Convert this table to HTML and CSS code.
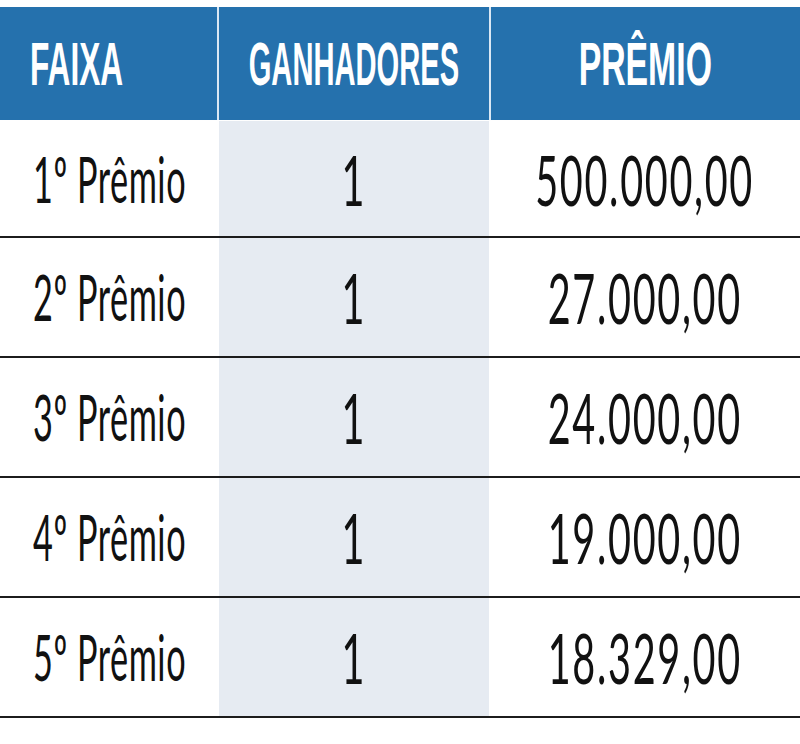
FILE: index.html
```html
<!DOCTYPE html>
<html lang="pt-BR">
<head>
<meta charset="utf-8">
<title>Resultado</title>
<link rel="stylesheet" href="styles.css">
</head>
<body>
<div class="table">
  <div class="row head">
    <div class="cell c1"><span class="t h-faixa">FAIXA</span></div>
    <div class="cell c2"><span class="t h-ganh">GANHADORES</span></div>
    <div class="cell c3"><span class="t h-premio">PRÊMIO</span></div>
  </div>
  <div class="row body first">
    <div class="cell c1"><span class="t lbl">1º Prêmio</span></div>
    <div class="cell c2"><span class="t num">1</span></div>
    <div class="cell c3"><span class="t num">500.000,00</span></div>
  </div>
  <div class="row body">
    <div class="cell c1"><span class="t lbl">2º Prêmio</span></div>
    <div class="cell c2"><span class="t num">1</span></div>
    <div class="cell c3"><span class="t num">27.000,00</span></div>
  </div>
  <div class="row body">
    <div class="cell c1"><span class="t lbl">3º Prêmio</span></div>
    <div class="cell c2"><span class="t num">1</span></div>
    <div class="cell c3"><span class="t num">24.000,00</span></div>
  </div>
  <div class="row body">
    <div class="cell c1"><span class="t lbl">4º Prêmio</span></div>
    <div class="cell c2"><span class="t num">1</span></div>
    <div class="cell c3"><span class="t num">19.000,00</span></div>
  </div>
  <div class="row body">
    <div class="cell c1"><span class="t lbl">5º Prêmio</span></div>
    <div class="cell c2"><span class="t num">1</span></div>
    <div class="cell c3"><span class="t num">18.329,00</span></div>
  </div>
</div>
</body>
</html>
```
FILE: styles.css
```css
html, body {
  margin: 0;
  padding: 0;
  background: #ffffff;
}

.table {
  padding-top: 7px;
  width: 800px;
  font-family: "Liberation Sans", Arial, sans-serif;
}

.row {
  display: grid;
  grid-template-columns: 217px 272px 1fr;
}

.cell {
  display: flex;
  align-items: center;
  justify-content: center;
  overflow: hidden;
}

.t {
  display: inline-block;
  white-space: nowrap;
  transform-origin: center center;
}

/* header */
.head {
  height: 113px;
  background: #2571ad;
  color: #ffffff;
}

.head .cell {
  font-weight: 700;
  font-size: 62px;
  line-height: 1;
}

.head .c2,
.head .c3 {
  border-left: 2px solid #dbe8f4;
}

.head .c1 {
  justify-content: flex-start;
  padding-left: 30px;
}

.h-faixa {
  transform-origin: left center;
  transform: scaleX(0.51);
}

.h-ganh {
  transform: scaleX(0.47);
}

.h-premio {
  transform: scaleX(0.545);
}

/* body rows */
.body {
  height: 118px;
  border-bottom: 2px solid #1c1c1c;
  color: #111111;
  font-family: Lato, "Liberation Sans", sans-serif;
  font-weight: 400;
}

.body.first {
  height: 115px;
  margin-top: 1px;
}

.body .cell {
  line-height: 1;
}

.body .c1 {
  justify-content: flex-start;
  padding-left: 33px;
}

.body .c2 {
  background: #e6ebf2;
  border-left: 2px solid #ffffff;
}

.lbl {
  font-size: 64px;
  letter-spacing: 1px;
  transform-origin: left center;
  transform: scaleX(0.535);
}

.num {
  font-size: 70px;
  letter-spacing: 3px;
  transform: scaleX(0.565);
}
```
